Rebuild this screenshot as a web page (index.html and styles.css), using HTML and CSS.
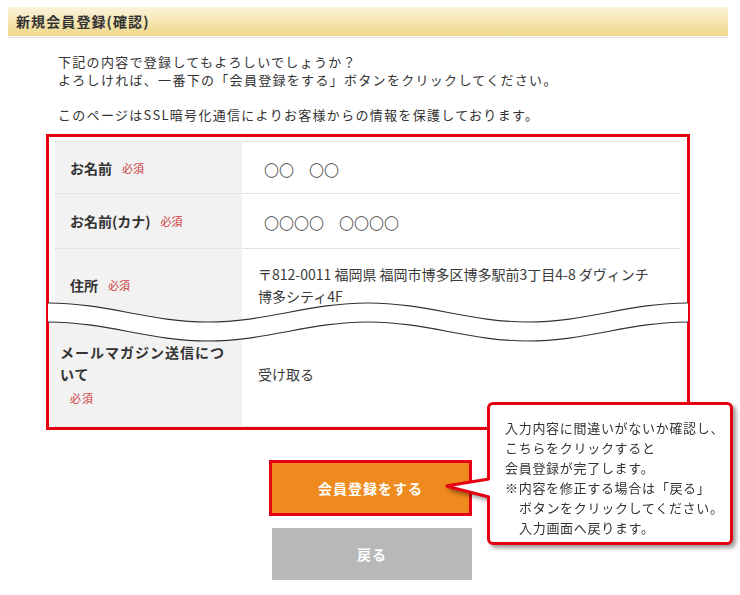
FILE: index.html
```html
<!DOCTYPE html>
<html lang="ja">
<head>
    <meta charset="UTF-8">
    <meta name="viewport" content="width=device-width, initial-scale=1.0">
    <title>新規会員登録(確認)</title>
    <link rel="stylesheet" href="styles.css">
</head>
<body>
    <div class="page">
        <h2 class="page-title">新規会員登録(確認)</h2>

        <div class="intro">
            <p>下記の内容で登録してもよろしいでしょうか？<br>よろしければ、一番下の「会員登録をする」ボタンをクリックしてください。</p>
            <p>このページはSSL暗号化通信によりお客様からの情報を保護しております。</p>
        </div>

        <div class="confirm-box">
            <div class="confirm-table">
                <div class="row row-name">
                    <div class="label">お名前<span class="req">必須</span></div>
                    <div class="value value-circle">〇〇　〇〇</div>
                </div>
                <div class="row row-kana">
                    <div class="label">お名前(カナ)<span class="req">必須</span></div>
                    <div class="value value-circle">〇〇〇〇　〇〇〇〇</div>
                </div>
                <div class="row row-address">
                    <div class="label">住所<span class="req">必須</span></div>
                    <div class="value">〒812-0011 福岡県 福岡市博多区博多駅前3丁目4-8 ダヴィンチ<br>博多シティ4F</div>
                </div>
                <div class="row row-mail">
                    <div class="label">
                        <div class="label-text">メールマガジン送信につ<br>いて<span class="req">必須</span></div>
                    </div>
                    <div class="value">受け取る</div>
                </div>
            </div>

            <!-- 省略の波線 -->
            <svg class="cut" width="640" height="44" viewBox="0 0 640 44">
                <path d="M0,3 C58,3 102,22 160,22 S262,3 320,3 S422,22 480,22 S582,3 640,3 L640,22 C582,22 538,41 480,41 S378,22 320,22 S218,41 160,41 S58,22 0,22 Z" fill="#fff"/>
                <path d="M0,3 C58,3 102,22 160,22 S262,3 320,3 S422,22 480,22 S582,3 640,3" fill="none" stroke="#333" stroke-width="1.2"/>
                <path d="M0,22 C58,22 102,41 160,41 S262,22 320,22 S422,41 480,41 S582,22 640,22" fill="none" stroke="#333" stroke-width="1.2"/>
            </svg>
        </div>

        <div class="actions">
            <button class="btn btn-submit">会員登録をする</button>
            <button class="btn btn-back">戻る</button>
        </div>

        <div class="callout">
            <div class="callout-box">
                入力内容に間違いがないか確認し、<br>
                こちらをクリックすると<br>
                会員登録が完了します。<br>
                ※内容を修正する場合は「戻る」
                <span class="indent">ボタンをクリックしてください。</span>
                <span class="indent">入力画面へ戻ります。</span>
            </div>
            <svg class="callout-tail" width="52" height="32" viewBox="0 0 52 32">
                <polygon points="5,14 47,7 50,9 50,23 47,25" fill="#fff"/>
                <polyline points="48,7 5,14 48,25" fill="none" stroke="#e60012" stroke-width="3"/>
            </svg>
        </div>
    </div>
</body>
</html>
```

FILE: styles.css
```css
body {
    margin: 0;
    font-family: "Noto Sans CJK JP", sans-serif;
    color: #333;
    background: #fff;
}
.page {
    position: relative;
    width: 740px;
}
.page-title {
    margin: 7px 12px 0 8px;
    height: 29px;
    line-height: 29px;
    text-indent: 8px;
    padding-bottom: 1px;
    border-bottom: 1px solid #e0e0e0;
    background: linear-gradient(#fbf4da, #eed588);
    background-clip: content-box;
    font-size: 14px;
    font-weight: bold;
    letter-spacing: 1.1px;
}
.intro {
    margin: 15px 0 0 58px;
    font-size: 13px;
    line-height: 18px;
    letter-spacing: 1.3px;
}
.intro p {
    margin: 0;
}
.intro p + p {
    margin-top: 17px;
}
.confirm-box {
    position: relative;
    margin: 10px 0 0 46px;
    width: 644px;
    height: 296px;
    box-sizing: border-box;
    border: 3px solid #e60012;
    padding: 4px 7px 0 6px;
}
.confirm-table {
    border-bottom: 1px dotted #ccc;
}
.row {
    display: flex;
    border-top: 1px dotted #ccc;
    box-sizing: border-box;
}
.row-name {
    height: 52px;
}
.row-kana {
    height: 55px;
}
.row-address {
    height: 73px;
}
.row-mail {
    height: 105px;
    margin-left: -6px;
    border-top: none;
}
.label {
    width: 187px;
    flex-shrink: 0;
    display: flex;
    align-items: center;
    box-sizing: border-box;
    padding-left: 15px;
    background: #f2f2f2;
    font-size: 14px;
    font-weight: bold;
}
.row-mail .label {
    width: 193px;
    padding-left: 11px;
}
.label-text {
    line-height: 22px;
    letter-spacing: 1px;
}
.req {
    margin-left: 10px;
    color: #cc3b3b;
    font-size: 11px;
    font-weight: normal;
}
.label-text .req {
    display: block;
    margin-top: 4px;
    line-height: 18px;
}
.value {
    flex: 1;
    display: flex;
    align-items: center;
    padding-left: 16px;
    color: #3a3a3a;
    font-size: 14px;
    line-height: 22px;
}
.value-circle {
    padding-left: 22px;
    padding-top: 4px;
    font-size: 15px;
    font-weight: 300;
}
.cut {
    position: absolute;
    left: -1px;
    top: 163px;
}
.actions {
    display: flex;
    flex-direction: column;
    align-items: center;
    margin-top: 30px;
    padding-left: 1px;
}
.btn {
    border: none;
    color: #fff;
    font-family: inherit;
    font-size: 14px;
    font-weight: bold;
    letter-spacing: 1px;
    cursor: pointer;
}
.btn-submit {
    width: 203px;
    height: 56px;
    border: 3px solid #e60012;
    background: #ef8a1e;
}
.btn-back {
    width: 200px;
    height: 52px;
    margin: 12px 0 0 3px;
    background: #b8b8b8;
}
.callout {
    position: absolute;
    left: 487px;
    top: 395px;
    filter: drop-shadow(3px 3px 2px rgba(0, 0, 0, 0.4));
}
.callout-box {
    width: 246px;
    height: 143px;
    box-sizing: border-box;
    border: 3px solid #e60012;
    border-radius: 6px;
    background: #fff;
    padding: 13px 0 0 15px;
    font-size: 13px;
    line-height: 20px;
    letter-spacing: 0.7px;
}
.indent {
    display: block;
    padding-left: 14px;
}
.callout-tail {
    position: absolute;
    left: -46px;
    top: 70px;
}
```
